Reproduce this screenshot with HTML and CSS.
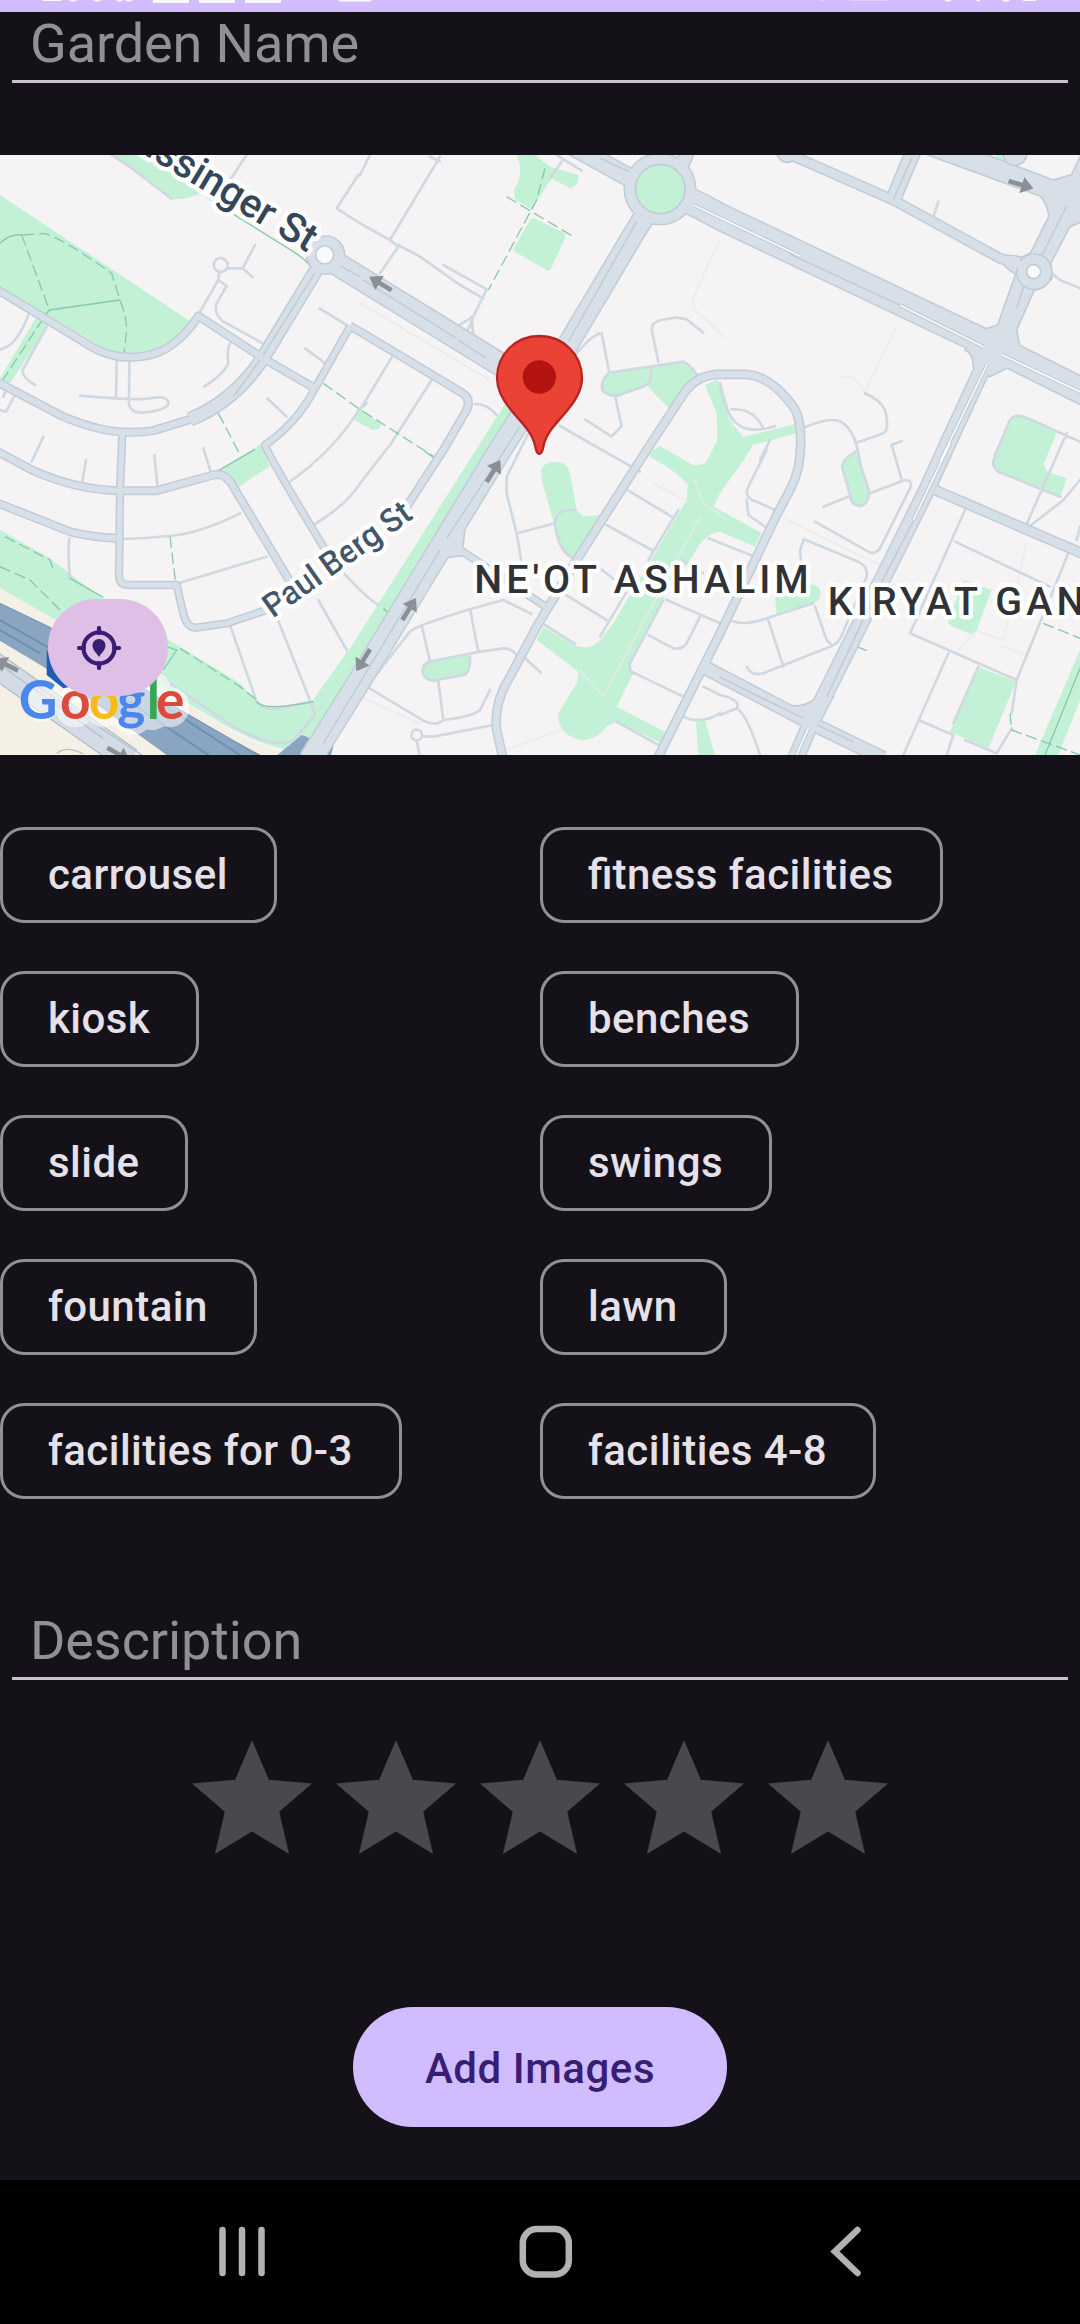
FILE: index.html
```html
<!DOCTYPE html>
<html lang="en">
<head>
<meta charset="utf-8">
<title>Add Garden</title>
<link rel="stylesheet" href="styles.css">
</head>
<body>
<div class="screen">
  <header class="status-bar">
    <svg width="1080" height="12" viewBox="0 0 1080 12" fill="#fdf8ff">
      <path d="M43 0h18v1h-18zM69 0h9l-3 1.500h-4zM93 0h9l-3 1.500h-4zM116 0h8l-3 1.500h-3zM125 0h8l-3 1.500h-3zM153 0h36v3h-36zM199 0h36v3h-36zM245 0h36v3h-36zM338 0h34l-2 1.500h-30zM945 0h7l-3 1.500h-3zM976 0h4v1.300h-3zM1002 0h8l-2 1.500h-4zM1022 0h14v1h-12z"/>
      <path d="M820 0h4v1h-4zM850 0h38v1h-38z" opacity=".35"/>
    </svg>
  </header>

  <main class="form">
    <div class="field field-name"><span class="hint">Garden Name</span></div>

    <section class="map">
      <svg class="map-canvas" viewBox="0 15 3240 1800" width="1080" height="600">
        <defs>
          <g id="major">
            <path class="w70" d="M1000 335L1580 692"/>
            <path class="w54" d="M1720 -10L1910 95"/>
            <path class="w62" d="M1960 150Q1940 190 1905 245L1700 590"/>
            <path class="w68" d="M1700 590L1500 900L1080 1590L930 1830"/>
            <path class="w36" d="M2040 60L2065 0"/>
            <path class="w80" d="M2040 140Q2100 165 2160 200L2960 580L3260 730"/>
            <path class="w45" d="M2950 650L2830 910L2785 1010L2430 1725L2385 1830"/>
            <path class="w36" d="M2100 1545L2430 1718L2650 1825"/>
            <path class="w42" d="M2742 0L2683 140"/>
            <path class="w36" d="M955 350L785 630Q700 755 570 808"/>
          </g>
          <g id="minor">
            <path class="w24" d="M2350 5L2680 150L3000 325L3060 345"/>
            <path class="w24" d="M2805 1020L3250 1212"/>
            <path class="w18" d="M570 808L460 842Q420 848 370 846Q300 845 190 800L-10 695"/>
            <path class="w18" d="M-10 418L250 575Q360 650 480 605Q545 575 595 498L790 625L945 715"/>
            <path class="w16" d="M1050 530L945 715Q890 820 795 885Q800 910 985 1215"/>
            <path class="w18" d="M1050 528L1080 545L1385 728Q1415 745 1400 780L1330 900L1220 1070"/>
            <path class="w18" d="M-10 903L100 962Q230 1020 360 1022L470 1022L640 975Q675 965 700 1010L885 1320"/>
            <path class="w18" d="M-10 1058L210 1145Q280 1163 350 1165"/>
            <path class="w16" d="M367 850L360 1020L357 1280Q360 1305 385 1305L530 1305L550 1390Q560 1435 590 1433L680 1420L800 1380"/>
            <path class="w20" d="M1512 1840L1490 1740Q1480 1660 1530 1580L1610 1430L1730 1230L1940 900L2055 725Q2090 678 2150 673L2235 673Q2310 675 2380 770Q2402 800 2402 880Q2402 960 2370 1020L2330 1095L2160 1450L2110 1550L1970 1830"/>
            <path class="w16" d="M1385 1203L1640 1372"/>
            <path class="w16" d="M2110 1550L2180 1585"/>
          </g>
          <path id="cross" d="M2770 10L2950 10L3160 90L3215 74L3245 10L3245 215L3210 230L3152 340L3156 385L3130 412L3102 422L3050 540L3062 602L3020 655L2970 680L2920 650Q2920 610 2895 600L2935 543L2993 525L3047 372Q3010 355 3000 318Q3040 312 3065 322L3092 308L3147 198Q3140 155 3120 138Z"/>
          <path id="fork" d="M1440 1040L1397 1120L1388 1195L1420 1215L1360 1220Q1320 1225 1325 1250L1280 1260Z"/>
          <path id="arrow" d="M-38 -7H4V-25L40 0L4 25V7H-38Z"/>
        </defs>

        <rect class="land" y="15" width="3240" height="1800"/>
        <path class="sand" d="M0 1315L160 1405L480 1610L720 1760L860 1815L0 1815Z"/>

        <g class="park">
          <path d="M0 135L565 510L590 500Q545 580 480 600Q400 625 330 605L0 410Z"/>
          <path d="M110 500L145 525L30 700L0 685Z"/>
          <path d="M335 15L430 15L600 130Q560 152 515 147L400 55Z"/>
          <path d="M650 970L785 880L808 950L710 1015Z"/>
          <path d="M1062 805L1080 775L1145 825Q1135 842 1115 838L1062 810Z"/>
          <path d="M0 1140L150 1225L300 1340L540 1490L720 1600L790 1675L935 1655L1060 1480L1515 762L1560 790L1110 1520L980 1720L880 1800Q820 1800 700 1740L480 1610L160 1405L0 1315Z"/>
          <path d="M1550 15L1605 15L1650 50L1735 75Q1740 105 1710 115L1655 85L1595 178L1545 150L1542 120Q1575 70 1550 15Z"/>
          <path d="M1600 203L1693 250Q1697 255 1695 265L1652 358Q1645 365 1635 358L1545 305Q1540 300 1543 292L1592 208Z"/>
          <path d="M1835 668L1950 650L1952 700Q1945 715 1850 738Q1805 735 1805 708Q1810 680 1835 668Z"/>
          <path d="M1955 650L2050 635Q2080 640 2100 690L2012 780L1945 712Z"/>
          <path d="M1623 960Q1630 935 1670 935Q1705 940 1710 970L1730 1080L1750 1098L1805 1095L1730 1230L1690 1205L1665 1130L1625 990Z"/>
          <path d="M1290 1535L1410 1515L1410 1560Q1400 1585 1300 1592Q1265 1585 1268 1560Q1270 1540 1290 1535Z"/>
          <path d="M2088 1715L2115 1712L2145 1815L2095 1815Z"/>
          <path d="M2526 940L2568 905L2608 1025Q2608 1065 2580 1068Q2560 1065 2555 1050Z"/>
          <path d="M2985 915L3030 810Q3045 790 3080 803L3170 850L3132 940Q3135 965 3150 968L3200 985L3180 1042L2995 965Q2970 945 2985 915Z"/>
          <path d="M2890 1290L2975 1320L2930 1440Q2920 1455 2905 1450L2850 1425Q2840 1420 2850 1400Z"/>
          <path d="M2935 1550L3048 1595L2965 1795L2850 1745Z"/>
          <path d="M3240 1500L3240 1650L3175 1815L3105 1815Z"/>
          <path d="M2325 1340L2400 1305Q2470 1290 2460 1345Q2440 1370 2330 1395Z"/>
          <path d="M2988 15L3035 15L3025 45L2988 30Z"/>
          <path d="M1950 905L1980 888L2080 945Q2115 950 2125 925L2152 870L2150 790L2115 705L2150 690L2165 700L2200 825L2230 860L2385 823L2388 850L2260 885L2235 925L2160 1030L2140 1070L2160 1080L2285 1150L2265 1190L2160 1145Q2110 1150 2080 1215L1990 1345L1890 1545L1900 1570L1850 1670L1995 1745L1985 1780L1850 1715L1820 1730Q1790 1770 1740 1770Q1670 1750 1675 1690L1730 1600L1735 1565L1610 1470L1630 1430L1720 1485Q1770 1505 1800 1470L1840 1420L2060 1050L2064 1005Q2040 970 1950 920Z"/>
        </g>

        <g class="faint">
          <path d="M1080 460L1470 690M2690 530L2595 725L2560 680L2520 682M2160 700L2200 850M2080 985L2110 1060L2180 1110M2100 1100L1810 1640L1740 1560M2350 1105L2640 1245M2160 270L2080 440Q2070 480 2120 510L2180 565M1080 1640L1260 1720M1520 1800L1680 1740M1960 1000L2070 1060M2880 1035L2960 1070M2920 1440L3010 1470L3080 1180M2870 1505L2925 1450M3010 1490L3080 1515"/>
        </g>

        <g class="lane">
          <path d="M85 495Q50 590 0 598M140 530L68 660Q65 680 105 705M350 625L348 745M388 630L387 765Q395 790 430 788Q510 780 505 755Q495 735 450 745Q400 752 240 737M690 580Q680 600 685 640Q670 675 612 710M597 490L655 390L680 408L650 460Q640 490 670 515L785 578M658 365L655 390M680 355L728 355L765 285M728 355L758 382M335 15L400 58L515 147M740 15L690 90M958 475L1045 528M915 595L973 638M802 745L860 800M130 860L95 935M610 895L632 965M463 915L472 1005M0 780L18 785L42 740M10 740L18 720"/>
          <path d="M258 930L247 995M208 1165Q202 1200 210 1285M370 1167Q430 1165 510 1158Q600 1150 720 1090M540 1298L800 1220M865 998Q1000 905 1080 775L1100 760M940 1125Q1040 1065 1080 1000L1170 885L1295 690M1080 780L1175 622M690 1425L770 1655Q790 1680 830 1676L935 1655M830 1400L945 1690M955 1350L1040 1500M985 1215Q1080 1330 1135 1365M480 1580L700 1730Q850 1810 890 1760L945 1695"/>
          <path d="M1080 75L1110 15M1080 220L1170 270L1320 20M1290 20L1320 35M1170 270L1195 290L1140 370M1195 285L1260 320L1380 405L1450 445M1330 345L1460 418L1420 500M1370 530L1420 500L1400 550M1415 500L1420 560M1075 75L1010 175L1080 220M1670 15L1745 62M1685 35L1650 85"/>
          <path d="M1730 610Q1780 550 1805 550L1828 670M1830 668L1950 650Q1960 690 1940 705L1850 738Q1805 735 1805 708Q1810 680 1830 668M1845 738L1865 828L1835 860L1755 808M1975 635L1955 540Q1955 515 1985 510L2030 502L2060 508L2110 548M1950 650L2050 635Q2080 650 2100 690M1425 762Q1460 760 1490 795M1680 828L1920 965M1590 840L1520 980L1520 1030L1550 1150L1565 1240M1552 1150L1665 1120M1725 1080L1690 1082Q1655 1095 1670 1150Q1685 1215 1730 1230"/>
          <path d="M1885 1022L2015 1100M1820 1125L1955 1200M2035 1080L1945 1230M1800 1255L1845 1290M1690 1330L1820 1410M1880 1325L1800 1460M1635 1425L1725 1482M1590 1335L1640 1372M1575 1525L1622 1567M1100 1610L1230 1445Q1240 1430 1410 1378L1510 1350L1595 1392M1410 1378L1435 1505M1265 1425L1290 1535M1100 1610L1270 1712Q1310 1730 1330 1710Q1420 1700 1440 1680L1470 1620M1290 1535L1440 1505L1510 1495Q1535 1495 1550 1515M1315 1595L1330 1710M1290 1535Q1270 1540 1268 1560Q1265 1585 1300 1592L1390 1575Q1410 1570 1410 1520M1270 1760L1300 1760L1480 1725M1250 1770L1258 1815"/>
          <path d="M1990 1350L1890 1540Q1885 1565 1905 1570L2050 1640M2000 1350L2160 1420M2100 1400L2060 1480Q2045 1500 2020 1495L1945 1455M2045 1230L2110 1270M2050 1700Q2100 1725 2160 1690M2110 1610L2160 1635M1850 1715L1975 1785M2125 1165L2265 1220M2300 900L2245 1010Q2230 1045 2270 1055L2325 1080M2240 1050L2245 1095L2295 1130M2160 700Q2180 830 2250 838Q2290 842 2325 828M2195 778Q2260 775 2288 832M2310 870L2280 930"/>
          <path d="M2415 832Q2500 795 2530 820Q2570 850 2580 940L2608 1025Q2605 1065 2580 1068Q2555 1065 2553 1045L2526 950Q2530 925 2567 905M2595 730Q2640 750 2655 780Q2670 840 2650 850L2570 878M2705 873L2675 885Q2680 900 2705 990M2470 1070L2545 1040M2610 1030L2715 990Q2740 990 2730 1015L2640 1195Q2625 1215 2605 1205L2445 1115M2403 1230L2400 1200L2412 1168L2575 1235Q2605 1250 2600 1280L2540 1420Q2520 1480 2495 1488L2290 1570Q2255 1580 2240 1550M2190 1410Q2230 1430 2300 1405L2440 1360M2305 1410L2350 1550M2445 1370L2480 1470L2495 1485M2895 1080L2730 1450L3050 1590L3205 1210M2865 1175L3150 1310M3315 900L3190 1050L3075 1140M2845 1510L2710 1815M2935 1550L2860 1720M2755 1710L2860 1755L2840 1815M2895 1770L2990 1810L3035 1735M3050 1590L3035 1690M3070 1145L3200 850M2985 915L3030 810Q3045 790 3080 803L3240 875M2815 155L2798 205M3155 370L3180 390L3240 415M3240 1130L3230 1170M2160 1635Q2225 1650 2210 1675L2160 1695M2210 1675Q2240 1690 2280 1815M2985 920Q2970 945 2995 965L3180 1040"/>
          <circle cx="662" cy="345" r="21"/>
          <circle cx="1250" cy="1755" r="16"/>
        </g>

        <g class="trail">
          <path stroke-dasharray="34 14" d="M65 255L148 480M70 255L130 250Q180 260 335 370L360 450Q380 500 380 540L372 610M130 505L5 695M655 790L718 910M970 700L1075 775L1310 925M1635 55L1610 150L1465 420M1520 140L1720 260M510 1160L527 1300M15 1160L150 1230L160 1260M0 1250L90 1290L180 1380M540 1495L720 1610L770 1650M3130 1420L3240 1465M3030 1690L3035 1740L3240 1815M2570 1490L2600 1502"/>
          <path d="M0 280Q30 250 68 255M148 480L360 450M148 480L125 510M620 140L720 205L880 305Q920 330 935 355M650 965L765 898M210 1285L310 1342M500 1490L530 1500L490 1560M770 1655Q790 1685 940 1655M3240 1555L3135 1815M1275 905L1305 925M1150 1375L1165 1388"/>
        </g>

        <path class="highway-edge" d="M0 1358L150 1430L450 1625L700 1770L800 1825L500 1825L300 1670L0 1475Z"/>
        <path class="highway" d="M0 1362L150 1434L450 1629L700 1774L780 1825L500 1825L300 1665L0 1470Z"/>
        <path class="highway-line" d="M0 1410L150 1495L640 1825M0 1440L120 1510M450 1640L720 1815"/>
        <path class="highway" d="M820 1825L905 1755L1000 1790L990 1825Z"/>
        <path class="sand" d="M0 1472L150 1562L500 1815L440 1815L0 1500Z"/>
        <path class="shield" d="M140 1500L210 1610L190 1615L140 1575Z"/>

        <use href="#minor" class="casing"/>
        <use href="#major" class="casing"/>
        <use href="#cross" class="patch"/>
        <use href="#fork" class="patch"/>
        <circle class="patch" cx="977" cy="315" r="57"/>
        <circle class="patch" cx="1980" cy="117" r="107"/>
        <circle class="patch" cx="2362" cy="5" r="32"/>
        <circle class="patch" cx="3103" cy="365" r="53"/>
        <circle class="patch" cx="3045" cy="10" r="36"/>
        <path class="patch" d="M2325 1655Q2430 1695 2470 1610L2500 1640L2450 1730Z"/>
        <use href="#minor" class="fill"/>
        <use href="#major" class="fill"/>
        <circle class="disc" cx="977" cy="315" r="54"/>
        <circle class="disc" cx="1980" cy="117" r="104"/>
        <path class="disc" d="M2900 560L3050 560L3070 640L2980 665L2920 630Z"/>
        <circle class="island" cx="974" cy="315" r="27"/>
        <circle class="island island-park" cx="1981" cy="117" r="74"/>
        <circle class="island" cx="3101" cy="365" r="21"/>

        <g class="median">
          <path d="M945 368L790 615M780 630L700 740M1022 348L1080 380M1090 390L1370 565M1375 570L1460 625M1910 215L1705 575M1560 830L1340 1165M1320 1200L970 1780M2735 25L2680 148M3200 168L3125 318M3070 410L3050 475M2160 1582L2410 1705M2450 1725L2560 1775M2760 1075L2630 1325L2480 1640M1800 25L1888 65M2370 313L2740 484"/>
        </g>
        <g class="gap-edge"><path d="M2080 165L2400 318M2700 466L2950 590M3005 614L3250 730M2962 642L2820 935M2850 880L2740 1110M2425 1735L2385 1825"/></g>
        <g class="gap"><path d="M2080 165L2400 318M2700 466L2950 590M3005 614L3250 730M2962 642L2820 935M2850 880L2740 1110M2425 1735L2385 1825"/></g>

        <path class="viaduct-edge" d="M-30 1535L390 1830"/>
        <path class="viaduct" d="M-30 1535L390 1830"/>
        <path class="viaduct-line" d="M100 1600L440 1825M-20 1530L310 1765M170 1810Q200 1785 250 1812"/>

        <g class="arrow">
          <use href="#arrow" transform="translate(1142 401) rotate(211)"/>
          <use href="#arrow" transform="translate(3062 104) rotate(17)"/>
          <use href="#arrow" transform="translate(1480 964) rotate(-58)"/>
          <use href="#arrow" transform="translate(1227 1378) rotate(-58)"/>
          <use href="#arrow" transform="translate(1090 1530) rotate(122)"/>
          <use href="#arrow" transform="translate(20 1545) rotate(206)"/>
          <use href="#arrow" transform="translate(355 1812) rotate(30)"/>
        </g>

        <text class="street street-main" text-anchor="end" transform="translate(922 308) rotate(31)">Kissinger St</text>
        <text class="street" textLength="522" transform="translate(818 1406) rotate(-35.500)">Paul Berg St</text>
        <text class="district" x="1423" y="1328" textLength="1003">NE'OT ASHALIM</text>
        <text class="district" x="2483" y="1395" textLength="770">KIRYAT GAN</text>

        <g class="pin">
          <path d="M1618 558C1546 558 1491 614 1491 684C1491 720 1508 750 1533 780C1565 818 1591 842 1602 875C1607 893 1609 912 1618 912C1627 912 1629 893 1634 875C1645 842 1671 818 1703 780C1728 750 1746 720 1746 684C1746 614 1690 558 1618 558Z"/>
          <circle cx="1618" cy="681" r="50"/>
        </g>

        <path class="logo-halo" d="M125 1650V1655M225 1670V1672M310 1670V1672M398 1670V1695M455 1625V1680M508 1670V1672"/>
        <text class="logo" x="56 180 266 352 440 468" y="1706"><tspan fill="#4a86ec">G</tspan><tspan fill="#dc4a3d">o</tspan><tspan fill="#f6bb18">o</tspan><tspan fill="#4a86ec">g</tspan><tspan fill="#34a853">l</tspan><tspan fill="#dc4a3d">e</tspan></text>
      </svg>

      <button class="locate" aria-label="My location">
        <svg width="44" height="44" viewBox="0 0 44 44">
          <circle cx="22" cy="22" r="15.500" fill="none" stroke="#381e72" stroke-width="4.200"/>
          <path d="M22 2v5M22 37v5M2 22h5M37 22h5" stroke="#381e72" stroke-width="4.200" stroke-linecap="round"/>
          <path d="M22 13c-4 0-6.500 3-6.500 6.500 0 4.500 4.500 8 6.500 11.500 2-3.500 6.500-7 6.500-11.500 0-3.500-2.500-6.500-6.500-6.500z" fill="#381e72"/>
        </svg>
      </button>
    </section>

    <section class="chips">
      <span class="chip">carrousel</span><span class="chip"><span class="ligature">fi</span>tness facilities</span>
      <span class="chip">kiosk</span><span class="chip">benches</span>
      <span class="chip">slide</span><span class="chip">swings</span>
      <span class="chip">fountain</span><span class="chip">lawn</span>
      <span class="chip">facilities for 0-3</span><span class="chip">facilities 4-8</span>
    </section>

    <div class="field field-description"><span class="hint">Description</span></div>

    <div class="rating">
      <svg viewBox="0 0 24 24"><path d="M12 17.270L18.180 21l-1.640-7.030L22 9.240l-7.190-.610L12 2 9.190 8.630 2 9.240l5.460 4.730L5.820 21z"/></svg>
      <svg viewBox="0 0 24 24"><path d="M12 17.270L18.180 21l-1.640-7.030L22 9.240l-7.190-.610L12 2 9.190 8.630 2 9.240l5.460 4.730L5.820 21z"/></svg>
      <svg viewBox="0 0 24 24"><path d="M12 17.270L18.180 21l-1.640-7.030L22 9.240l-7.190-.610L12 2 9.190 8.630 2 9.240l5.460 4.730L5.820 21z"/></svg>
      <svg viewBox="0 0 24 24"><path d="M12 17.270L18.180 21l-1.640-7.030L22 9.240l-7.190-.610L12 2 9.190 8.630 2 9.240l5.460 4.730L5.820 21z"/></svg>
      <svg viewBox="0 0 24 24"><path d="M12 17.270L18.180 21l-1.640-7.030L22 9.240l-7.190-.610L12 2 9.190 8.630 2 9.240l5.460 4.730L5.820 21z"/></svg>
    </div>

    <button class="add-images">Add Images</button>
  </main>

  <nav class="nav-bar">
    <svg width="52" height="56" viewBox="0 0 52 56"><path d="M8.500 6v43M28 6v43M47.500 6v43" stroke="#b2b2b2" stroke-width="6.500" stroke-linecap="round"/></svg>
    <svg width="56" height="56" viewBox="0 0 56 56"><rect x="4.800" y="5" width="46" height="45.500" rx="14" fill="none" stroke="#b2b2b2" stroke-width="6.500"/></svg>
    <svg width="40" height="56" viewBox="0 0 40 56"><path d="M31.500 6L9 27.500L31.500 49" fill="none" stroke="#b2b2b2" stroke-width="6.500" stroke-linecap="round"/></svg>
  </nav>
</div>
</body>
</html>
```
FILE: styles.css
```css
* {
  box-sizing: border-box;
}

body {
  margin: 0;
  background: #141218;
  font-family: Roboto, "Liberation Sans", sans-serif;
}

svg {
  display: block;
}

button {
  border: 0;
  padding: 0;
  font: inherit;
}

.screen {
  display: flex;
  flex-direction: column;
  width: 1080px;
  height: 2324px;
  overflow: hidden;
}

.status-bar {
  flex: none;
  height: 12px;
  background: #d0bcff;
}

.form {
  flex: 1;
  display: flex;
  flex-direction: column;
}

.field {
  margin: 0 12px;
  padding-left: 18px;
  border-bottom: 3px solid #cac4d0;
  display: flex;
  align-items: flex-end;
}

.hint {
  font-size: 54px;
  line-height: 64px;
  letter-spacing: -.1px;
  color: #938f96;
}

.field-name {
  height: 71px;
  padding-bottom: 4px;
}

.map {
  position: relative;
  margin-top: 72px;
  height: 600px;
  overflow: hidden;
}

.land { fill: #f5f3f4; }
.sand { fill: #f5f0e5; }
.park { fill: #c3f1d5; }
.faint { fill: none; stroke: #ebe9e8; stroke-opacity: .8; stroke-width: 5; }
.lane { fill: none; stroke: #d0d9e2; stroke-width: 8; stroke-linecap: round; stroke-linejoin: round; }
.trail { fill: none; stroke: #86c9ae; stroke-width: 4; }
.highway { fill: #8aa5c2; }
.highway-edge { fill: #7795b5; }
.highway-line { fill: none; stroke: #6f8fb0; stroke-width: 6; }
.shield { fill: #1b5fb5; }

/* Roads are drawn twice: a wider casing, then the fill on top */
.casing { --edge: 9px; fill: none; stroke: #c1cdd6; stroke-linejoin: round; }
.fill { --edge: 0px; fill: none; stroke: #d7e0e8; stroke-linejoin: round; }
.w16 { stroke-width: calc(16px + var(--edge)); }
.w18 { stroke-width: calc(18px + var(--edge)); }
.w20 { stroke-width: calc(20px + var(--edge)); }
.w24 { stroke-width: calc(24px + var(--edge)); }
.w36 { stroke-width: calc(36px + var(--edge)); }
.w42 { stroke-width: calc(40px + var(--edge)); }
.w45 { stroke-width: calc(43px + var(--edge)); }
.w54 { stroke-width: calc(50px + var(--edge)); }
.w62 { stroke-width: calc(58px + var(--edge)); }
.w68 { stroke-width: calc(64px + var(--edge)); }
.w70 { stroke-width: calc(64px + var(--edge)); }
.w80 { stroke-width: calc(74px + var(--edge)); }

.patch { fill: #d7e0e8; stroke: #c1cdd6; stroke-width: 5; }
.disc { fill: #d7e0e8; }
.island { fill: #fafafa; stroke: #c1cdd6; stroke-width: 5; }
.island-park { fill: #c3f1d5; }
.median { fill: none; stroke: #c1cdd6; stroke-width: 5; }
.gap-edge { fill: none; stroke: #c1cdd6; stroke-width: 12; }
.gap { fill: none; stroke: #fbfbfc; stroke-width: 5; }
.viaduct-edge { fill: none; stroke: #a7b4c2; stroke-width: 76; }
.viaduct { fill: none; stroke: #d3dce6; stroke-width: 70; }
.viaduct-line { fill: none; stroke: #b4c0cc; stroke-width: 4; }
.arrow { fill: #8b9096; }

.street,
.district {
  font-weight: 500;
  stroke: #fff;
  stroke-width: 26px;
  stroke-linejoin: round;
  paint-order: stroke;
}

.street {
  font-size: 99px;
  fill: #45556c;
}

.street-main {
  font-size: 121px;
  fill: #35465b;
}

.district {
  font-size: 118px;
  fill: #303236;
}

.pin path { fill: #ea4335; stroke: #b92324; stroke-width: 7; }
.pin circle { fill: #b31412; }

.logo {
  font-family: Lato, sans-serif;
  font-weight: 700;
  font-size: 160px;
}

.logo-halo {
  fill: none;
  stroke: #fff;
  stroke-width: 120px;
  stroke-linecap: round;
  opacity: .55;
}

.locate {
  position: absolute;
  left: 48px;
  top: 444px;
  display: flex;
  align-items: center;
  width: 120px;
  height: 97px;
  padding-left: 29px;
  border-radius: 48px;
  background: #e0bfe7;
}

.chips {
  margin-top: 72px;
  display: grid;
  grid-template-columns: 540px 540px;
  grid-auto-rows: 96px;
  row-gap: 48px;
  justify-items: start;
}

.chip {
  display: flex;
  align-items: center;
  padding: 0 46px 2px 45px;
  border: 3px solid #938f96;
  border-radius: 24px;
  color: #e6e0e9;
  font-size: 42px;
  font-weight: 500;
  letter-spacing: .45px;
}

.ligature {
  letter-spacing: 0;
}

.field-description {
  margin-top: 96px;
  height: 85px;
  padding-bottom: 4px;
}

.rating {
  margin-top: 48px;
  display: flex;
  justify-content: center;
  fill: #4a474e;
}

.rating svg {
  width: 144px;
  height: 144px;
}

.add-images {
  align-self: center;
  margin-top: 135px;
  width: 374px;
  height: 120px;
  padding-top: 2px;
  border-radius: 60px;
  background: #d0bcff;
  color: #381e72;
  font-size: 42px;
  font-weight: 500;
  letter-spacing: .55px;
}

.nav-bar {
  flex: none;
  height: 144px;
  padding: 44px 214px 0;
  display: flex;
  justify-content: space-between;
  background: #000;
}
```
